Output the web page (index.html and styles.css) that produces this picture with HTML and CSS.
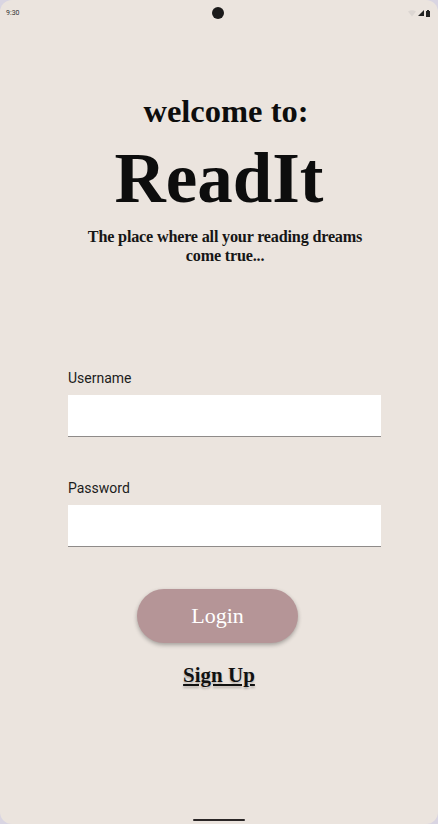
FILE: index.html
```html
<!DOCTYPE html>
<html lang="en">
<head>
<meta charset="utf-8">
<title>ReadIt</title>
<link rel="stylesheet" href="styles.css">
</head>
<body>
<div class="screen">
  <div class="status">
    <span class="time">9:30</span>
    <span class="camera"></span>
    <span class="sys">
      <svg class="wifi" width="8" height="7" viewBox="0 0 8 7"><path d="M0 1.5 Q4 -1 8 1.5 L4 6.5 Z" fill="#dcd6d2"/></svg>
      <svg class="signal" width="6" height="6" viewBox="0 0 6 6"><path d="M6 0 V6 H0 Z" fill="#222"/></svg>
      <svg class="battery" width="4" height="7" viewBox="0 0 4 7"><rect x="1" y="0" width="2" height="1" fill="#222"/><rect x="0" y="1" width="4" height="6" fill="#222"/></svg>
    </span>
  </div>
  <main class="content">
    <h2 class="welcome">welcome to:</h2>
    <h1 class="brand">ReadIt</h1>
    <p class="tagline">The place where all your reading dreams<br>come true...</p>
    <form class="form">
      <div class="field">
        <label class="label">Username</label>
        <div class="input"></div>
      </div>
      <div class="field">
        <label class="label">Password</label>
        <div class="input"></div>
      </div>
    </form>
    <button class="login" type="button">Login</button>
    <a class="signup">Sign Up</a>
  </main>
  <div class="navbar"><span class="handle"></span></div>
</div>
</body>
</html>
```
FILE: styles.css
```css
* { box-sizing: border-box; }
html, body { margin: 0; padding: 0; }
body {
  background: #d9d5e2;
  width: 438px;
  height: 824px;
  overflow: hidden;
}
.screen {
  width: 438px;
  height: 824px;
  background: #ebe4de;
  border-radius: 12px;
  display: flex;
  flex-direction: column;
  overflow: hidden;
}
.status {
  height: 26px;
  display: grid;
  grid-template-columns: 1fr auto 1fr;
  align-items: center;
  padding: 0 8px 0 6px;
}
.time {
  font-family: Roboto, sans-serif;
  font-size: 7px;
  color: #333;
  justify-self: start;
}
.camera {
  width: 12px;
  height: 12px;
  border-radius: 50%;
  background: #1b1a1a;
}
.sys {
  justify-self: end;
  display: flex;
  align-items: center;
  gap: 2px;
}
.content {
  flex: 1;
  display: flex;
  flex-direction: column;
  align-items: center;
  padding-top: 65px;
  font-family: "Liberation Serif", serif;
  color: #0d0d0d;
}
.welcome {
  margin: 0 0 0 14px;
  font-size: 32.5px;
  line-height: 40px;
  font-weight: bold;
}
.brand {
  margin: 7px 0 0;
  font-size: 71px;
  line-height: 80px;
  font-weight: bold;
}
.tagline {
  margin: 10px 0 0 12px;
  font-size: 16.2px;
  line-height: 19px;
  text-align: center;
  font-weight: bold;
  letter-spacing: -0.2px;
  color: #161616;
}
.form {
  align-self: stretch;
  padding: 0 57px 0 68px;
  margin-top: 104px;
  display: flex;
  flex-direction: column;
  gap: 43px;
}
.field {
  display: flex;
  flex-direction: column;
  gap: 9px;
}
.label {
  font-family: Roboto, sans-serif;
  font-size: 14px;
  line-height: 16px;
  color: #1c1c1c;
}
.input {
  height: 42px;
  background: #fff;
  border-bottom: 1px solid #8f8b89;
}
.login {
  margin-top: 42px;
  width: 161px;
  height: 54px;
  border: none;
  border-radius: 27px;
  background: #b59597;
  color: #fff;
  font-family: "Liberation Serif", serif;
  font-size: 22px;
  box-shadow: 0 2px 4px rgba(0, 0, 0, 0.3);
  margin-right: 3px;
}
.signup {
  margin-top: 19px;
  font-size: 21px;
  line-height: 26px;
  font-weight: bold;
  text-decoration: underline;
  text-underline-offset: 2px;
  text-shadow: 0 2px 2px rgba(0, 0, 0, 0.22);
  color: #111;
}
.navbar {
  height: 24px;
  display: flex;
  justify-content: center;
  align-items: flex-end;
  padding-bottom: 3px;
}
.handle {
  width: 52px;
  height: 2px;
  border-radius: 1px;
  background: #2a2626;
}
```
